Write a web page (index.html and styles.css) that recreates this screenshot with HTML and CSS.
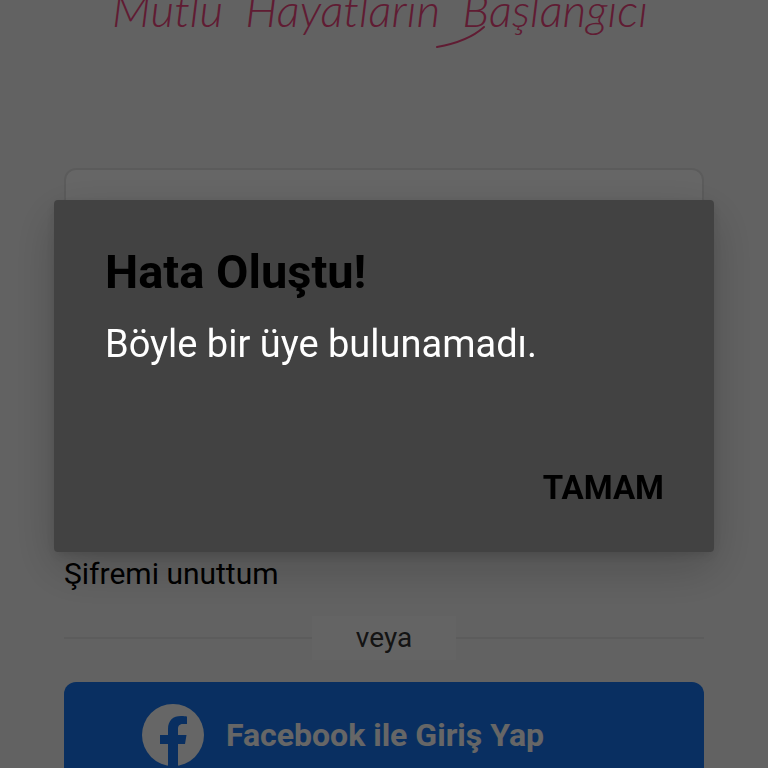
FILE: index.html
```html
<!DOCTYPE html>
<html lang="tr">
<head>
<meta charset="utf-8">
<meta name="viewport" content="width=device-width, initial-scale=1">
<title>Giriş</title>
<link rel="stylesheet" href="styles.css">
</head>
<body>
<main class="login">
  <p class="slogan">
    <span>Mutlu</span> <span>Hayatların</span>
    <span class="slogan-last">Başlangıcı<svg class="swash" viewBox="0 0 50 24" aria-hidden="true"><path d="M1 23C18 20 36 14 48 3"/></svg></span>
  </p>
  <form class="form">
    <input class="field" type="text" aria-label="Üye">
    <a class="forgot" href="#">Şifremi unuttum</a>
    <div class="divider"><span class="divider-label">veya</span></div>
    <button class="facebook" type="button">
      <svg class="facebook-icon" viewBox="0 0 62 62" aria-hidden="true">
        <circle cx="31" cy="31" r="31" fill="#fff"/>
        <path fill="#1877f2" d="M26 62V40H18V31H26V25C26 16.500 31 12 39 12C42 12 45 12.500 45 12.500V20H41C37 20 36 22.500 36 25V31H44.500L43 40H36V62Z"/>
      </svg>
      <span>Facebook ile Giriş Yap</span>
    </button>
  </form>
</main>
<div class="overlay">
  <section class="dialog" role="alertdialog" aria-labelledby="dialog-title" aria-describedby="dialog-text">
    <h1 class="dialog-title" id="dialog-title">Hata Oluştu!</h1>
    <p class="dialog-text" id="dialog-text">Böyle bir üye bulunamadı.</p>
    <button class="dialog-action" type="button">TAMAM</button>
  </section>
</div>
</body>
</html>
```
FILE: styles.css
```css
* {
  box-sizing: border-box;
}

html,
body {
  height: 100%;
}

body {
  margin: 0;
  overflow: hidden;
  background: #f5f5f5;
  font-family: Roboto, "Liberation Sans", sans-serif;
  color: #000;
}

.login {
  padding: 0 64px;
}

.slogan {
  display: flex;
  justify-content: space-between;
  margin: 0 56px 0 48px;
  padding-bottom: 148px;
  font-family: Lato, sans-serif;
  font-size: 46px;
  font-style: italic;
  font-weight: 300;
  line-height: 20px;
  white-space: nowrap;
  color: #f0487f;
}

.slogan-last {
  position: relative;
}

.swash {
  position: absolute;
  right: 100%;
  top: 24px;
  width: 50px;
  height: 24px;
  margin-right: -24px;
  fill: none;
  stroke: currentColor;
  stroke-width: 2;
  stroke-linecap: round;
}

.form {
  display: flex;
  flex-direction: column;
}

.field {
  height: 104px;
  margin-bottom: 284px;
  padding: 0 32px;
  border: 2px solid #e4e4e4;
  border-radius: 12px;
  background: #fff;
  font: inherit;
  font-size: 30px;
}

.forgot {
  align-self: flex-start;
  font-size: 30px;
  line-height: 36px;
  color: inherit;
  text-decoration: none;
}

.divider {
  display: flex;
  align-items: center;
  margin: 24px 0 22px;
}

.divider::before,
.divider::after {
  content: "";
  flex: 1;
  height: 2px;
  background: #e6e6e6;
}

.divider-label {
  width: 144px;
  background: #fbfbfb;
  font-size: 28px;
  line-height: 44px;
  text-align: center;
  color: #333;
}

.facebook {
  display: flex;
  align-items: center;
  justify-content: center;
  gap: 22px;
  height: 106px;
  padding: 0 82px 0 0;
  border: 0;
  border-radius: 12px;
  background: #1877f2;
  font: inherit;
  font-size: 32px;
  font-weight: 700;
  color: #fff;
}

.facebook-icon {
  width: 62px;
  height: 62px;
}

.overlay {
  position: fixed;
  inset: 0;
  display: flex;
  align-items: center;
  padding: 0 54px 16px;
  background: rgba(0, 0, 0, 0.6);
}

.dialog {
  display: flex;
  flex-direction: column;
  flex: 1;
  padding: 44px 40px 36px 51px;
  border-radius: 4px;
  background: #424242;
  box-shadow: 0 16px 48px rgba(0, 0, 0, 0.2), 0 4px 12px rgba(0, 0, 0, 0.12);
}

.dialog-title {
  margin: 0 0 16px;
  font-size: 47px;
  font-weight: 700;
  line-height: 56px;
}

.dialog-text {
  margin: 0 0 88px;
  font-size: 38px;
  line-height: 56px;
  color: #fff;
}

.dialog-action {
  align-self: flex-end;
  padding: 0 10px;
  border: 0;
  background: none;
  font: inherit;
  font-size: 33px;
  font-weight: 700;
  line-height: 56px;
}
```
